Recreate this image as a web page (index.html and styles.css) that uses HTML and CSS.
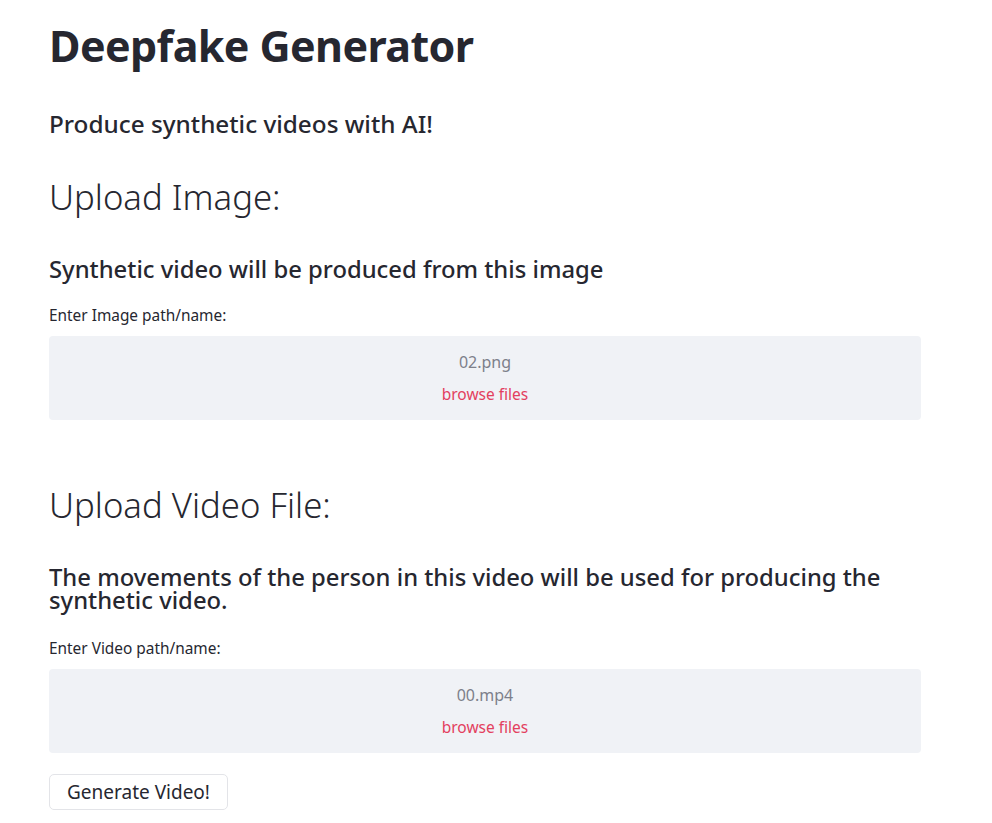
FILE: index.html
```html
<!DOCTYPE html>
<html lang="en">
<head>
<meta charset="utf-8">
<title>Deepfake Generator</title>
<link rel="stylesheet" href="styles.css">
</head>
<body>
<main class="main">
  <h1 class="title">Deepfake Generator</h1>
  <h3 class="subtitle">Produce synthetic videos with AI!</h3>

  <section class="section">
    <h2 class="section-head">Upload Image:</h2>
    <h4 class="section-desc">Synthetic video will be produced from this image</h4>
    <label class="field-label">Enter Image path/name:</label>
    <div class="dropzone">
      <span class="file-name">02.png</span>
      <span class="browse">browse files</span>
    </div>
  </section>

  <section class="section section-video">
    <h2 class="section-head">Upload Video File:</h2>
    <h4 class="section-desc section-desc-long">The movements of the person in this video will be used for producing the synthetic video.</h4>
    <label class="field-label">Enter Video path/name:</label>
    <div class="dropzone">
      <span class="file-name">00.mp4</span>
      <span class="browse">browse files</span>
    </div>
  </section>

  <button class="btn" type="button">Generate Video!</button>
</main>
</body>
</html>
```
FILE: styles.css
```css
* { box-sizing: border-box; }
html, body { margin: 0; padding: 0; background: #ffffff; }
body {
  font-family: "Noto Sans", "Open Sans", sans-serif;
  color: #262730;
}
.main {
  width: 872px;
  margin-left: 49px;
  padding-top: 20px;
  display: flex;
  flex-direction: column;
}
h1, h2, h3, h4 { margin: 0; }
.title {
  font-size: 43px;
  line-height: 52px;
  font-weight: 700;
  letter-spacing: -0.6px;
}
.subtitle {
  margin-top: 37px;
  font-size: 24.3px;
  line-height: 30px;
  font-weight: 500;
}
.section { display: flex; flex-direction: column; }
.section-head {
  margin-top: 38px;
  font-size: 34.7px;
  line-height: 40px;
  font-weight: 300;
}
.section-desc {
  margin-top: 38px;
  font-size: 23.8px;
  line-height: 28px;
  font-weight: 500;
}
.section-desc-long { line-height: 23px; margin-top: 41px; }
.field-label {
  margin-top: 24px;
  font-size: 15.4px;
  line-height: 18px;
}
.section-video .field-label { margin-top: 28px; }
.dropzone {
  margin-top: 11px;
  height: 84px;
  background: #f0f2f6;
  border-radius: 4px;
  display: flex;
  flex-direction: column;
  align-items: center;
  justify-content: center;
  gap: 12px;
}
.section-video { margin-top: 27px; }
.section-video .dropzone { margin-top: 11px; }
.file-name {
  font-size: 16px;
  line-height: 20px;
  color: #7d808a;
}
.browse {
  font-size: 15.5px;
  line-height: 20px;
  color: #e3405e;
}
.btn {
  align-self: flex-start;
  margin-top: 21px;
  width: 179px;
  height: 36px;
  background: #ffffff;
  border: 1px solid #e3e4e8;
  border-radius: 5px;
  font-family: inherit;
  font-size: 19px;
  color: #262730;
  padding: 0;
}
```
